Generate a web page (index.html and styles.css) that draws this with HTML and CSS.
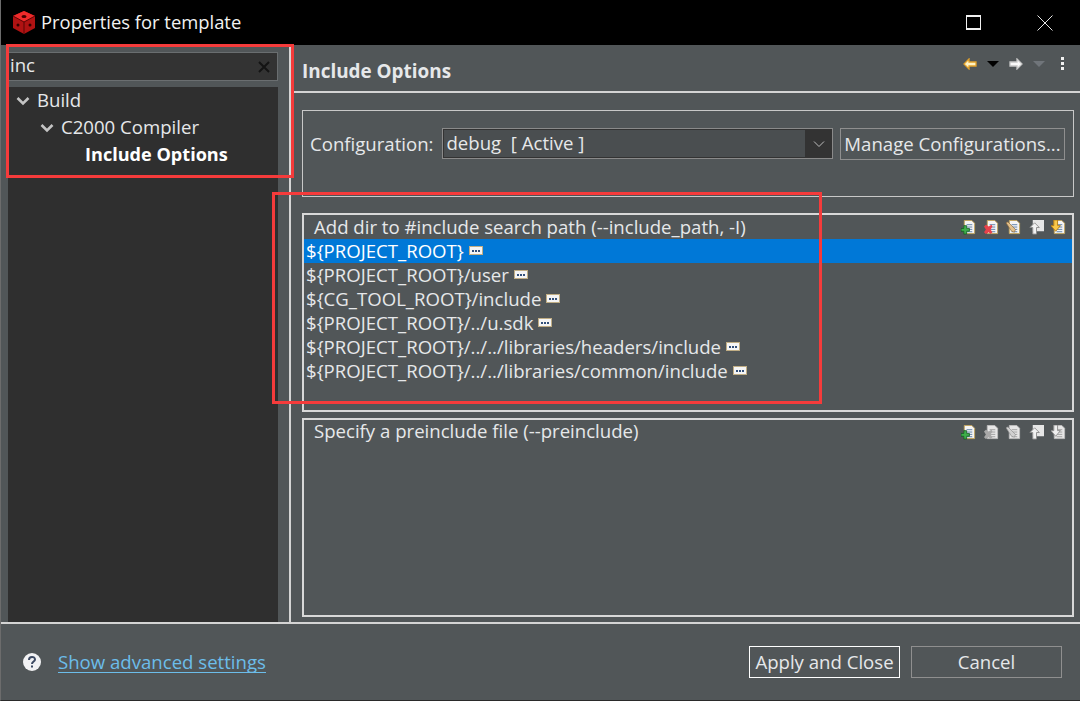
FILE: index.html
```html
<!DOCTYPE html>
<html lang="en">
<head>
  <meta charset="UTF-8" />
  <title>Properties for template</title>
  <link rel="stylesheet" href="styles.css">
</head>
<body>

  <svg class="defs" width="0" height="0">
    <symbol id="doc" viewBox="0 0 16 16">
      <path d="M3.500 .5h8l3 3v11h-11z" fill="#f4f4f4" stroke="#c2a45c"/>
      <path d="M6 5h6M6 7.500h6M6 10h6M6 12.500h6" stroke="#5b7fa8"/>
    </symbol>
    <symbol id="doc-off" viewBox="0 0 16 16">
      <path d="M3.500 .5h8l3 3v11h-11z" fill="#e6e6e6" stroke="#bdbdbd"/>
      <path d="M6 5h6M6 7.500h6M6 10h6M6 12.500h6" stroke="#a0a0a0"/>
    </symbol>
    <symbol id="ellipsis" viewBox="0 0 14 10">
      <rect x=".5" y=".5" width="13" height="8" fill="#f5f5f5" stroke="#c0ad84"/>
      <path d="M3 4h2v2H3zM6 4h2v2H6zM9 4h2v2H9z" fill="#33507a"/>
    </symbol>
    <symbol id="add" viewBox="0 0 16 16">
      <use href="#doc"/>
      <path d="M3 6h3v3h3v3H6v3H3v-3H0V9h3z" fill="#3fae4a" stroke="#0f5a1e" stroke-width=".8"/>
    </symbol>
    <symbol id="del" viewBox="0 0 16 16">
      <use href="#doc"/>
      <path d="M0 7l2-2 3 2 3-2 1 2-2 3 2 3-2 2-2-2-3 2-2-2 2-3z" fill="#e8414a"/>
    </symbol>
    <symbol id="del-off" viewBox="0 0 16 16">
      <use href="#doc-off"/>
      <path d="M0 7l2-2 3 2 3-2 1 2-2 3 2 3-2 2-2-2-3 2-2-2 2-3z" fill="#a8a8a8"/>
    </symbol>
    <symbol id="edit" viewBox="0 0 16 16">
      <use href="#doc"/>
      <path d="M0 3l2-1 8 8-1 3-3-1z" fill="#e2c08c" stroke="#8c6a3a" stroke-width=".7"/>
    </symbol>
    <symbol id="edit-off" viewBox="0 0 16 16">
      <use href="#doc-off"/>
      <path d="M0 3l2-1 8 8-1 3-3-1z" fill="#d0d0d0" stroke="#8e8e8e" stroke-width=".7"/>
    </symbol>
    <symbol id="up-off" viewBox="0 0 16 16">
      <rect x="4" y="0" width="12" height="12" fill="#e6e6e6"/>
      <path d="M6 3l5 5H8v7H4V8H1z" fill="#f2f2f2" stroke="#8e8e8e"/>
    </symbol>
    <symbol id="down" viewBox="0 0 16 16">
      <use href="#doc"/>
      <path d="M3 0h4v6h3l-5 6-5-6h3z" fill="#f8c84a" stroke="#b87f14"/>
    </symbol>
    <symbol id="down-off" viewBox="0 0 16 16">
      <use href="#doc-off"/>
      <path d="M3 0h4v6h3l-5 6-5-6h3z" fill="#efefef" stroke="#8e8e8e"/>
    </symbol>
    <symbol id="chevron" viewBox="0 0 14 10">
      <path d="M1.500 2l5.500 5.500L12.500 2" fill="none" stroke="#c4c4c4" stroke-width="2.600"/>
    </symbol>
  </svg>

  <div class="window">

    <header class="titlebar">
      <svg class="logo" viewBox="0 0 22 23">
        <path d="M11 0l11 5v12l-11 6L0 17V5z" fill="#b01212"/>
        <path d="M11 0l11 5-11 6L0 5z" fill="#ee2b2b"/>
        <path d="M11 11v12M0 5l11 6 11-6" stroke="#5a0505" fill="none"/>
        <ellipse cx="11" cy="5.500" rx="2.500" ry="1.500" fill="#400"/>
        <circle cx="5" cy="14" r="1.500" fill="#300"/>
        <circle cx="17" cy="14" r="1.500" fill="#300"/>
      </svg>
      <span class="title">Properties for template</span>
      <span class="win-max"></span>
      <svg class="win-close" viewBox="0 0 16 16"><path d="M.5 .5l15 15M15.500 .5l-15 15" stroke="#e6e6e6"/></svg>
    </header>

    <div class="main">

      <aside class="sidebar">
        <div class="search">
          <span>inc</span>
          <svg class="search-clear" viewBox="0 0 12 12"><path d="M1 1l10 10M11 1L1 11" stroke="#141414" stroke-width="2"/></svg>
        </div>
        <ul class="tree">
          <li class="tree-row"><svg class="chev"><use href="#chevron"/></svg>Build</li>
          <li class="tree-row level2"><svg class="chev"><use href="#chevron"/></svg>C2000 Compiler</li>
          <li class="tree-row level3">Include Options</li>
        </ul>
      </aside>

      <section class="content">
        <div class="page-head">
          <h2>Include Options</h2>
          <div class="nav-icons">
            <svg class="nav-arrow" viewBox="0 0 14 12"><path d="M6 1L1 6l5 5V8h7V4H6z" fill="#fff3c4" stroke="#e2a12a" stroke-width="1.300"/></svg>
            <span class="tri"></span>
            <svg class="nav-arrow" viewBox="0 0 14 12"><path d="M8 1l5 5-5 5V8H1V4h7z" fill="#fafafa" stroke="#c8c8c8" stroke-width="1.300"/></svg>
            <span class="tri off"></span>
            <span class="dots"><i></i><i></i><i></i></span>
          </div>
        </div>

        <div class="config">
          <label>Configuration:</label>
          <div class="combo">
            <span class="combo-text">debug&nbsp; [ Active ]</span>
            <span class="combo-btn"><svg viewBox="0 0 12 8"><path d="M1 1.500l5 5 5-5" fill="none" stroke="#bdbdbd"/></svg></span>
          </div>
          <button class="btn manage">Manage Configurations...</button>
        </div>

        <div class="listbox first">
          <div class="list-head">
            <span>Add dir to #include search path (--include_path, -I)</span>
            <div class="tools">
              <svg><use href="#add"/></svg>
              <svg><use href="#del"/></svg>
              <svg><use href="#edit"/></svg>
              <svg><use href="#up-off"/></svg>
              <svg><use href="#down"/></svg>
            </div>
          </div>
          <ul class="paths">
            <li class="selected">${PROJECT_ROOT}<svg class="more"><use href="#ellipsis"/></svg></li>
            <li>${PROJECT_ROOT}/user<svg class="more"><use href="#ellipsis"/></svg></li>
            <li>${CG_TOOL_ROOT}/include<svg class="more"><use href="#ellipsis"/></svg></li>
            <li>${PROJECT_ROOT}/../u.sdk<svg class="more"><use href="#ellipsis"/></svg></li>
            <li>${PROJECT_ROOT}/../../libraries/headers/include<svg class="more"><use href="#ellipsis"/></svg></li>
            <li>${PROJECT_ROOT}/../../libraries/common/include<svg class="more"><use href="#ellipsis"/></svg></li>
          </ul>
        </div>

        <div class="listbox second">
          <div class="list-head">
            <span>Specify a preinclude file (--preinclude)</span>
            <div class="tools">
              <svg><use href="#add"/></svg>
              <svg><use href="#del-off"/></svg>
              <svg><use href="#edit-off"/></svg>
              <svg><use href="#up-off"/></svg>
              <svg><use href="#down-off"/></svg>
            </div>
          </div>
        </div>
      </section>

    </div>

    <footer class="footer">
      <svg class="help" viewBox="0 0 18 18">
        <circle cx="9" cy="9" r="9" fill="#f2f2f4"/>
        <path d="M6 7c0-4 6-4 6-.5 0 2-3 2-3 4.500" fill="none" stroke="#3d4a63" stroke-width="2"/>
        <rect x="8" y="12.500" width="2" height="2" fill="#3d4a63"/>
      </svg>
      <a class="advanced" href="#">Show advanced settings</a>
      <button class="btn primary">Apply and Close</button>
      <button class="btn cancel">Cancel</button>
    </footer>

    <!-- red annotation boxes drawn on top of the dialog -->
    <div class="mark mark-tree"></div>
    <div class="mark mark-list"></div>
  </div>

</body>
</html>
```

FILE: styles.css
```css
* {
  box-sizing: border-box;
}

body {
  margin: 0;
  background: #515658;
  font-family: "Open Sans", "Noto Sans", sans-serif;
  font-size: 18.600px;
  color: #e6e8ea;
}

ul {
  list-style: none;
  margin: 0;
  padding: 0;
}

.defs {
  position: absolute;
}

.window {
  position: relative;
  width: 1080px;
  height: 701px;
  display: flex;
  flex-direction: column;
  border-left: 1px solid #6c6c6c;
  border-bottom: 1px solid #2a2a2a;
  overflow: hidden;
}

/* title bar */
.titlebar {
  height: 45px;
  flex: none;
  background: #000;
  display: flex;
  align-items: center;
  padding-left: 12px;
  color: #f2f2f2;
}

.logo {
  width: 22px;
  height: 23px;
}

.title {
  margin-left: 6px;
  margin-bottom: 2px;
  font-size: 18.400px;
}

.win-max {
  margin-left: auto;
  width: 15px;
  height: 15px;
  border: 1px solid #f0f0f0;
  border-width: 2px 1.500px;
}

.win-close {
  width: 16px;
  height: 16px;
  margin-left: 56px;
  margin-right: 27px;
}

/* main area */
.main {
  flex: 1;
  display: flex;
  min-height: 0;
}

.sidebar {
  width: 290px;
  flex: none;
  padding: 7px 11px 0 7px;
  border-right: 2px solid #d4d4d4;
  display: flex;
  flex-direction: column;
}

.search {
  height: 29px;
  flex: none;
  background: #333;
  border: 1px solid #6a6e70;
  border-left: 0;
  margin-bottom: 6px;
  display: flex;
  align-items: center;
  justify-content: space-between;
  padding: 0 6px 4px 2px;
}

.search-clear {
  width: 12px;
  height: 12px;
  margin-top: 5px;
  margin-right: 1px;
}

.tree {
  flex: 1;
  background: #2f2f2f;
  padding-top: 0;
}

.tree-row {
  height: 27px;
  display: flex;
  align-items: center;
  padding: 0 0 2px 8px;
}

.chev {
  width: 14px;
  height: 10px;
  margin: 2px 7px 0 0;
}

.level2 {
  padding-left: 32px;
}

.level3 {
  padding-left: 77px;
  font-size: 18.100px;
  font-weight: 700;
  color: #fff;
}

.content {
  flex: 1;
  min-width: 0;
  display: flex;
  flex-direction: column;
  padding-bottom: 5px;
}

.page-head {
  height: 48px;
  flex: none;
  margin-left: 2px;
  padding-left: 9px;
  border-bottom: 2px solid #d4d4d4;
  display: flex;
  align-items: center;
  justify-content: space-between;
}

.page-head h2 {
  margin: 6px 0 0;
  font-size: 18.900px;
  font-weight: 700;
}

.nav-icons {
  display: flex;
  align-items: center;
  align-self: flex-start;
  gap: 10px;
  margin-top: 12px;
  padding-right: 16px;
}

.nav-arrow {
  width: 14px;
  height: 12px;
}

.tri {
  width: 0;
  height: 0;
  border: 6px solid transparent;
  border-top: 6px solid #000;
  border-bottom: 0;
}

.tri.off {
  border-top-color: #70757a;
}

.dots {
  margin-left: 6px;
  display: flex;
  flex-direction: column;
  gap: 2px;
}

.dots i {
  width: 3px;
  height: 3px;
  background: #f0f0f0;
}

.config {
  height: 87px;
  flex: none;
  margin: 17px 6px 16px 11px;
  border: 1px solid #c8c8c8;
  display: flex;
  align-items: flex-start;
  padding: 17px 8px 0 7px;
}

.config label {
  line-height: 32px;
  margin-right: 9px;
  white-space: nowrap;
}

.combo {
  flex: 1;
  height: 31px;
  border: 1px solid #8a8a8a;
  display: flex;
  background: #4a4e50;
}

.combo-text {
  flex: 1;
  padding-left: 2px;
  line-height: 26px;
  border: 1px solid #333;
  border-right: 0;
}

.combo-btn {
  width: 27px;
  background: #333;
  display: flex;
  align-items: center;
  justify-content: center;
}

.combo-btn svg {
  width: 12px;
  height: 8px;
}

.btn {
  height: 32px;
  background: none;
  border: 1px solid #8f8f8f;
  color: #e6e8ea;
  font-family: inherit;
  font-size: inherit;
  padding: 0 0 2px;
}

.manage {
  width: 225px;
  flex: none;
  margin-left: 7px;
  white-space: nowrap;
}

.listbox {
  flex: 1;
  margin: 0 6px 0 11px;
  border: 2px solid #d8d8d8;
}

.listbox.first {
  margin-bottom: 6px;
}

.list-head {
  height: 24px;
  display: flex;
  align-items: center;
  justify-content: space-between;
  padding: 0 5px 0 10px;
}

.list-head span {
  margin-bottom: 2px;
}

.second .list-head span {
  margin-bottom: 4px;
}

.tools {
  display: flex;
  gap: 7.500px;
  margin-right: 1px;
}

.tools svg {
  width: 15px;
  height: 15px;
}

.paths li {
  height: 24px;
  line-height: 24px;
  padding-left: 2px;
  display: flex;
  align-items: center;
}

.paths .selected {
  background: #0078d7;
  color: #fff;
}

.more {
  width: 14px;
  height: 10px;
  margin-left: 5px;
}

/* bottom buttons */
.footer {
  height: 78px;
  flex: none;
  border-top: 2px solid #d4d4d4;
  display: flex;
  align-items: center;
  padding: 0 18px 0 22px;
}

.help {
  width: 18px;
  height: 18px;
}

.advanced {
  margin-left: 17px;
  color: #6cbdea;
  text-decoration: none;
  border-bottom: 1px solid #6cbdea;
  line-height: 21px;
}

.footer .btn {
  width: 151px;
}

.primary {
  margin-left: auto;
  border-color: #fff;
}

.cancel {
  margin-left: 11px;
}

/* red boxes */
.mark {
  position: absolute;
  border: 3px solid #f53b3b;
  pointer-events: none;
}

.mark-tree {
  left: 5px;
  top: 44px;
  width: 288px;
  height: 134px;
}

.mark-list {
  left: 271px;
  top: 192px;
  width: 550px;
  height: 212px;
}
```
